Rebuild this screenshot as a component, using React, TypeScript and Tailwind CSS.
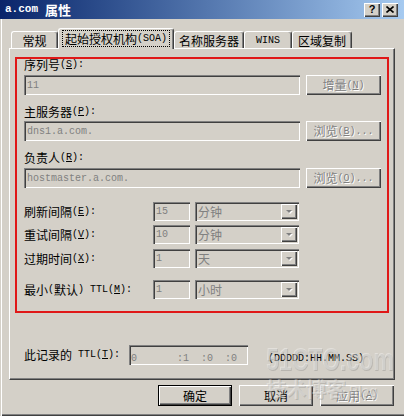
import React from "react";

const CJK = "font-['Noto_Sans_CJK_SC',sans-serif]";
const MONO = "font-['Liberation_Mono',monospace]";
const SUNK =
  "bg-[#d4d0c8] shadow-[inset_1px_1px_0_#808080,inset_2px_2px_0_#404040,inset_-1px_-1px_0_#ffffff]";
const RAISED =
  "bg-[#d4d0c8] shadow-[inset_1px_1px_0_#ffffff,inset_-1px_-1px_0_#404040,inset_-2px_-2px_0_#808080]";
const DIS = "text-[#808080] [text-shadow:1px_1px_0_#ffffff]";

function L({ children }: { children: React.ReactNode }) {
  return <span className={`${MONO} text-[10px] whitespace-pre`}>{children}</span>;
}
function Z({ children }: { children: React.ReactNode }) {
  return <span className={`${CJK} text-[12px]`}>{children}</span>;
}

function Label({ zh, k }: { zh: string; k: string }) {
  return (
    <div className="h-[12px] flex items-center leading-[12px] text-black whitespace-nowrap">
      <Z>{zh}</Z>
      <L>
        (<span className="underline">{k}</span>):
      </L>
    </div>
  );
}

function Input({ text, w }: { text: string; w: string }) {
  return (
    <div className={`${SUNK} ${w} h-full flex items-center pl-[3px] text-[#808080]`}>
      <L>{text}</L>
    </div>
  );
}

function Select({ text }: { text: string }) {
  return (
    <div className={`${SUNK} w-[104px] h-full flex items-center justify-between pl-[3px] pr-[2px]`}>
      <span className={`${CJK} text-[12px] text-[#808080] leading-none`}>{text}</span>
      <div className={`${RAISED} w-[16px] h-[15px] flex items-center justify-center`}>
        <svg width="8" height="5" viewBox="0 0 8 5">
          <path d="M1 1h6L4 4z" fill="#ffffff" transform="translate(1,1)" />
          <path d="M1 1h6L4 4z" fill="#808080" />
        </svg>
      </div>
    </div>
  );
}

function TimeRow({ zh, k, num, unit, mt, pre }: { zh: string; k: string; num: string; unit: string; mt: string; pre?: React.ReactNode }) {
  return (
    <div className={`flex items-center h-[19px] ${mt}`}>
      <div className="w-[129px]">
        {pre ?? <Label zh={zh} k={k} />}
      </div>
      <Input text={num} w="w-[37px]" />
      <div className="w-[5px]" />
      <Select text={unit} />
    </div>
  );
}

function Tab({ children, w, sel }: { children: React.ReactNode; w: string; sel?: boolean }) {
  if (sel)
    return (
      <div
        className={`${w} h-[21px] -mb-[1px] relative z-10 bg-[#d4d0c8] border-t border-l border-white border-r border-r-[#404040] rounded-t-[3px] shadow-[inset_-1px_0_0_#808080] flex items-start justify-center pt-[1px]`}
      >
        <div className="border border-dotted border-black px-[2px] h-[17px] flex items-center">{children}</div>
      </div>
    );
  return (
    <div
      className={`${w} h-[17px] bg-[#d4d0c8] border-t border-l border-white border-r border-r-[#404040] rounded-t-[3px] shadow-[inset_-1px_0_0_#808080] flex items-center justify-center pt-[1px]`}
    >
      {children}
    </div>
  );
}

function Btn({ children, w, def, dis }: { children: React.ReactNode; w: string; def?: boolean; dis?: boolean }) {
  return (
    <div
      className={`${w} h-full flex items-center justify-center ${def ? "border border-black" : ""} ${RAISED} ${dis ? DIS : "text-black"}`}
    >
      <div className="flex items-center">{children}</div>
    </div>
  );
}

export default function App() {
  return (
    <div className="w-[404px] h-[416px] bg-[#d4d0c8] relative overflow-hidden flex flex-col shadow-[inset_1px_0_0_#d4d0c8,inset_2px_0_0_#ffffff,inset_0_-1px_0_#404040,inset_0_-2px_0_#808080]">
      {/* Title bar */}
      <div className="h-[19px] shrink-0 bg-gradient-to-r from-[#0a246a] to-[#a6caf0] flex items-center pl-[5px] pr-[6px]">
        <span className={`${MONO} text-[11px] font-bold text-white`}>a.com</span>
        <span className={`${CJK} text-[13px] font-bold text-white ml-[7px] leading-none`}>属性</span>
        <div className="flex-1" />
        <div className={`${RAISED} w-[16px] h-[14px] flex items-center justify-center`}>
          <span className="font-['Liberation_Sans',sans-serif] font-bold text-[11px] leading-none text-black">?</span>
        </div>
        <div className={`${RAISED} w-[16px] h-[14px] ml-[2px] flex items-center justify-center`}>
          <svg width="8" height="7" viewBox="0 0 8 7">
            <path d="M0.5 0.5L7.5 6.5M7.5 0.5L0.5 6.5" stroke="#000" strokeWidth="1.6" />
          </svg>
        </div>
      </div>

      {/* Tabs + panel */}
      <div className="pl-[9px] pt-[9px]">
        <div className="flex items-end h-[20px] pl-[2px]">
          <Tab w="w-[47px]">
            <Z>常规</Z>
          </Tab>
          <Tab w="w-[116px]" sel>
            <Z>起始授权机构</Z>
            <L>(SOA)</L>
          </Tab>
          <Tab w="w-[70px]">
            <Z>名称服务器</Z>
          </Tab>
          <Tab w="w-[48px]">
            <L>WINS</L>
          </Tab>
          <Tab w="w-[60px]">
            <Z>区域复制</Z>
          </Tab>
        </div>
        <div className="w-[386px] h-[332px] border-t border-l border-white border-r border-b border-r-[#404040] border-b-[#404040] shadow-[inset_-1px_-1px_0_#808080] flex flex-col">
          {/* Red box */}
          <div className="mt-[8px] mx-[5px] h-[256px] border-2 border-[#e01818] pl-[7px] pr-[6px] flex flex-col">
            <Label zh="序列号" k="S" />
            <div className="flex h-[20px] mt-[4px]">
              <Input text="11" w="w-[276px]" />
              <div className="w-[6px]" />
              <Btn w="w-[75px]" dis>
                <Z>增量</Z>
                <L>(<span className="underline">N</span>)</L>
              </Btn>
            </div>
            <div className="mt-[11px]">
              <Label zh="主服务器" k="P" />
            </div>
            <div className="flex h-[20px] mt-[3px]">
              <Input text="dns1.a.com." w="w-[276px]" />
              <div className="w-[6px]" />
              <Btn w="w-[75px]" dis>
                <Z>浏览</Z>
                <L>(<span className="underline">B</span>)...</L>
              </Btn>
            </div>
            <div className="mt-[11px]">
              <Label zh="负责人" k="R" />
            </div>
            <div className="flex h-[20px] mt-[4px]">
              <Input text="hostmaster.a.com." w="w-[276px]" />
              <div className="w-[6px]" />
              <Btn w="w-[75px]" dis>
                <Z>浏览</Z>
                <L>(<span className="underline">O</span>)...</L>
              </Btn>
            </div>
            <TimeRow zh="刷新间隔" k="E" num="15" unit="分钟" mt="mt-[14px]" />
            <TimeRow zh="重试间隔" k="V" num="10" unit="分钟" mt="mt-[4px]" />
            <TimeRow zh="过期时间" k="X" num="1" unit="天" mt="mt-[5px]" />
            <TimeRow
              zh=""
              k="M"
              num="1"
              unit="小时"
              mt="mt-[12px]"
              pre={
                <div className="h-[12px] flex items-center leading-[12px] text-black whitespace-nowrap">
                  <Z>最小</Z>
                  <L>(</L>
                  <Z>默认</Z>
                  <L>) TTL(<span className="underline">M</span>):</L>
                </div>
              }
            />
          </div>

          {/* TTL row */}
          <div className="flex items-center h-[20px] mt-[32px] pl-[14px]">
            <div className="w-[105px] flex items-center leading-[12px] text-black whitespace-nowrap">
              <Z>此记录的</Z>
              <L>{" TTL("}<span className="underline">T</span>):</L>
            </div>
            <div className={`${SUNK} w-[119px] h-full flex items-center text-[#808080]`}>
              <div className="w-[48px] pl-[2px]"><L>0</L></div>
              <div className="w-[24px]"><L>:1</L></div>
              <div className="w-[24px]"><L>:0</L></div>
              <div className="w-[20px]"><L>:0</L></div>
            </div>
            <div className="ml-[20px] text-black">
              <L>(DDDDD:HH.MM.SS)</L>
            </div>
          </div>
        </div>
      </div>

      {/* Bottom buttons */}
      <div className="flex justify-end gap-[7px] pr-[10px] mt-[5px] h-[21px]">
        <Btn w="w-[74px]" def>
          <Z>确定</Z>
        </Btn>
        <Btn w="w-[74px]">
          <Z>取消</Z>
        </Btn>
        <Btn w="w-[74px]" dis>
          <Z>应用</Z>
          <L>(<span className="underline">A</span>)</L>
        </Btn>
      </div>

      {/* Watermark */}
      <div className="absolute left-[266px] top-[342px] w-[128px] pointer-events-none select-none text-white/35 [text-shadow:1px_1px_0_rgba(120,120,120,0.3)]">
        <div className="origin-left scale-x-[0.72] font-['Liberation_Sans',sans-serif] font-bold text-[32px] leading-[34px] whitespace-nowrap">51CTO.com</div>
        <div className="flex items-end gap-[3px] mt-[2px] whitespace-nowrap">
          <span className={`${CJK} text-[20px] leading-[22px] font-bold`}>技术博客</span>
          <span className="font-['Liberation_Sans',sans-serif] text-[14px] leading-[18px]">Blog</span>
        </div>
      </div>
    </div>
  );
}
